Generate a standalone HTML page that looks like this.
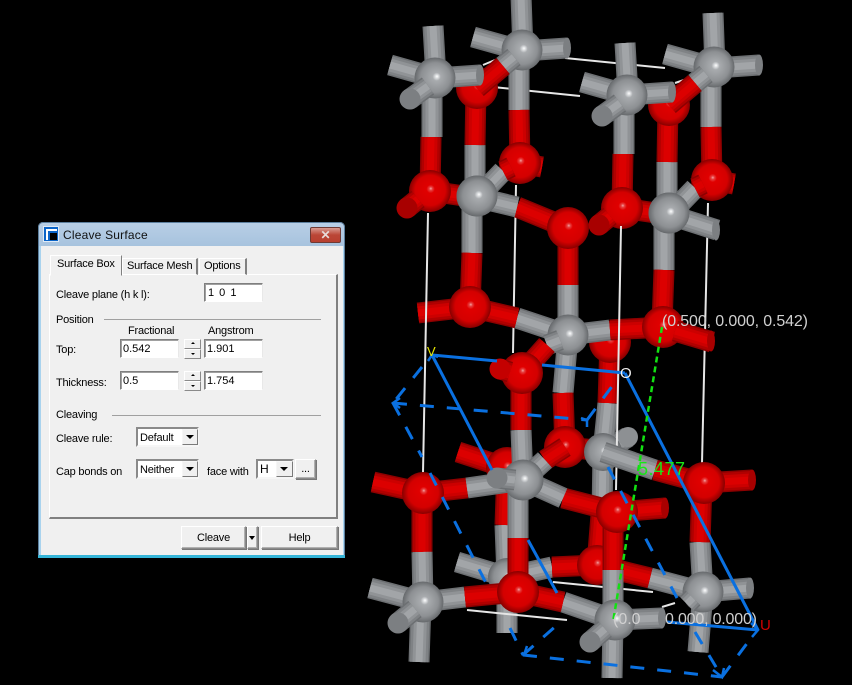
<!DOCTYPE html>
<html><head><meta charset="utf-8"><title>Cleave Surface</title>
<style>
html,body{margin:0;padding:0;background:#000;width:852px;height:685px;overflow:hidden}
svg{position:absolute;left:0;top:0}
.g1{fill:none;stroke:#6c6f72;stroke-width:21}.g2{fill:none;stroke:#7f8285;stroke-width:18}.g3{fill:none;stroke:#909396;stroke-width:13}.g4{fill:none;stroke:#a2a5a8;stroke-width:7}
.r1{fill:none;stroke:#8c0000;stroke-width:21}.r2{fill:none;stroke:#b00000;stroke-width:18}.r3{fill:none;stroke:#cc0000;stroke-width:13}.r4{fill:none;stroke:#dc0000;stroke-width:7}
.gc{fill:#7c7f82}.rc{fill:#a80000}
.w{fill:none;stroke:#e6e6e6;stroke-width:2}
.b{fill:none;stroke:#0a70e0;stroke-width:3}
.d{fill:none;stroke:#0a70e0;stroke-width:3;stroke-dasharray:14 13}
#dlg{position:absolute;left:38px;top:222px;width:307px;height:336px;box-sizing:border-box;background:linear-gradient(#b9cfe6,#a7c3de 24px);border-radius:5px 5px 0 0;font:11px "Liberation Sans",sans-serif;color:#000;box-shadow:inset 0 0 0 1px #5c7f9e}
#dlg div,#dlg span{position:absolute;box-sizing:border-box;white-space:nowrap}
.body{left:2px;top:24px;width:303px;height:310px;background:#f0f0f0}
.bot{left:0;top:333px;width:307px;height:3px;background:#35b5d8}
.ledge{left:1px;top:24px;width:1.5px;height:310px;background:#a9d3ee}
.redge{left:304.5px;top:24px;width:1.5px;height:310px;background:#a9d3ee}
.t{line-height:14px;letter-spacing:-.2px}
.inp{background:#fff;border:1px solid;border-color:#7f7f7f #e8e8e8 #fff #7f7f7f;box-shadow:inset 1px 1px 0 #a0a0a0;line-height:18px;padding-left:2px;font-size:11px}
.btn{background:#f0f0f0;border:1px solid;border-color:#fff #8a8a8a #8a8a8a #fff;box-shadow:1px 1px 0 #777,inset -1px -1px 0 #b0b0b0;text-align:center;line-height:20px;letter-spacing:-.2px}
.ar{width:0;height:0;border-left:4px solid transparent;border-right:4px solid transparent;border-top:4px solid #000}
.line{background:#a0a0a0;height:1px}
.cb{background:#fff;border:2px solid #8a8a8a;border-right-color:#f6f6f6;border-bottom-color:#f6f6f6;line-height:18px;padding-left:2px;letter-spacing:-.2px}
.cbb{background:#f0f0f0;border:1px solid;border-color:#f6f6f6 #7a7a7a #7a7a7a #f6f6f6}
</style></head><body>
<svg width="852" height="685" viewBox="0 0 852 685" xmlns="http://www.w3.org/2000/svg">
<defs>
<radialGradient id="rb" cx=".5" cy=".5" r=".5" fx=".52" fy=".44">
<stop offset="0" stop-color="#f4a6a6"/><stop offset=".08" stop-color="#e64040"/><stop offset=".2" stop-color="#e00000"/><stop offset=".72" stop-color="#d40000"/><stop offset="1" stop-color="#860000"/></radialGradient>
<radialGradient id="gb" cx=".5" cy=".5" r=".5" fx=".55" fy=".46">
<stop offset="0" stop-color="#ffffff"/><stop offset=".07" stop-color="#e0e2e4"/><stop offset=".2" stop-color="#a8abae"/><stop offset=".72" stop-color="#8d9093"/><stop offset="1" stop-color="#66696c"/></radialGradient>

<path id="a1" d="M523 51L521 -4M523 51L473 37M519 51L519 110"/>
<path id="a2" d="M519 110L520 163"/>
<path id="a3" d="M520 163L542 167"/>
<path id="a4" d="M523 51L567 48"/>
<path id="a5" d="M476 88L475 145"/>
<path id="a6" d="M475 145L475 197"/>
<path id="a7" d="M477 88L503 66"/>
<path id="a8" d="M503 66L514 57"/>
<path id="a9" d="M436 78L433 26M436 78L390 65M436 78L480 75M432 78L432 137"/>
<path id="a10" d="M431 137L430 191"/>
<path id="a11" d="M428 86L410 99"/>
<path id="a12" d="M472 197L472 253"/>
<path id="a13" d="M472 253L470 307"/>
<path id="a14" d="M430 191L464 196"/>
<path id="a14b" d="M418 199L407 208M511 167L503 171"/>
<path id="a15" d="M475 197L464 196M503 171L478 197"/>
<g id="unit">
 <use href="#a12" class="g1"/><use href="#a12" class="g2"/><use href="#a12" class="g3"/><use href="#a12" class="g4"/>
 <use href="#a13" class="r1"/><use href="#a13" class="r2"/><use href="#a13" class="r3"/><use href="#a13" class="r4"/>
 <use href="#a1" class="g1"/><use href="#a1" class="g2"/><use href="#a1" class="g3"/><use href="#a1" class="g4"/>
 <use href="#a4" class="g1"/><use href="#a4" class="g2"/><use href="#a4" class="g3"/><use href="#a4" class="g4"/>
 <ellipse class="gc" cx="567" cy="48" rx="4" ry="10.5"/>
 <use href="#a2" class="r1"/><use href="#a2" class="r2"/><use href="#a2" class="r3"/><use href="#a2" class="r4"/>
 <use href="#a3" class="r1"/><use href="#a3" class="r2"/><use href="#a3" class="r3"/><use href="#a3" class="r4"/>
 <circle cx="520" cy="163" r="21" fill="url(#rb)"/>
 <use href="#a6" class="g1"/><use href="#a6" class="g2"/><use href="#a6" class="g3"/><use href="#a6" class="g4"/>
 <use href="#a5" class="r1"/><use href="#a5" class="r2"/><use href="#a5" class="r3"/><use href="#a5" class="r4"/>
 <circle cx="477" cy="88" r="21" fill="url(#rb)"/>
 <circle cx="522" cy="50" r="20.5" fill="url(#gb)"/>
 <use href="#a8" class="g1"/><use href="#a8" class="g2"/><use href="#a8" class="g3"/><use href="#a8" class="g4"/>
 <use href="#a7" class="r1"/><use href="#a7" class="r2"/><use href="#a7" class="r3"/><use href="#a7" class="r4"/>
 <use href="#a10" class="r1"/><use href="#a10" class="r2"/><use href="#a10" class="r3"/><use href="#a10" class="r4"/>
 <use href="#a9" class="g1"/><use href="#a9" class="g2"/><use href="#a9" class="g3"/><use href="#a9" class="g4"/>
 <ellipse class="gc" cx="480" cy="75" rx="4" ry="10.5"/>
 <circle cx="435" cy="78" r="20.5" fill="url(#gb)"/>
 <use href="#a11" class="g1"/><use href="#a11" class="g2"/><use href="#a11" class="g3"/><use href="#a11" class="g4"/>
 <circle class="gc" cx="410" cy="99" r="10.5"/>
 <use href="#a14" class="r1"/><use href="#a14" class="r2"/><use href="#a14" class="r3"/><use href="#a14" class="r4"/>
 <circle cx="430" cy="191" r="21" fill="url(#rb)"/>
 <use href="#a15" class="g1"/><use href="#a15" class="g2"/><use href="#a15" class="g3"/><use href="#a15" class="g4"/>
 <use href="#a14b" class="r1"/><use href="#a14b" class="r2"/><use href="#a14b" class="r3"/><use href="#a14b" class="r4"/>
 <circle class="rc" cx="407" cy="208" r="10.5"/>
 <circle cx="477" cy="196" r="20.5" fill="url(#gb)"/>
</g>

<path id="b1" d="M507 577L457 562M507 577L507 633M507 577L505 525M507 577L552 567M703 592L650 578M603 452L602 515"/>
<path id="b2" d="M505 525L507 468M507 468L458 452M552 567L597 565M650 578L597 565M601 515L597 565"/>
<path id="b3" d="M610 342L608 403M563 393L565 447M565 447L595 450"/>
<path id="b4" d="M608 403L603 452M568 335L563 393M603 452L628 437"/>
<path id="c1" d="M475 197L517 207"/>
<path id="c2" d="M517 207L568 228M568 228L568 285"/>
<path id="c3" d="M568 285L568 335M517 318L568 335M610 330L568 335"/>
<path id="c4" d="M470 307L418 313M470 307L517 318M663 327L610 330"/>
<path id="c5" d="M675 331L712 342"/>
<path id="c6" d="M667 214L717 230"/>
<path id="c7" d="M560 340L547 345M521 430L523 480"/>
<path id="c8" d="M547 345L522 373M521 373L521 430"/>
<path id="c9" d="M510 372L500 369"/>
<path id="d1" d="M603 452L655 470M700 542L703 592M703 592L750 588M703 592L698 652"/>
<path id="d1b" d="M693 598L687 604"/>
<path id="d2" d="M655 470L703 483M702 483L700 542M703 483L752 480"/>
<path id="d3" d="M523 480L467 488M523 480L563 498M523 480L545 460M518 480L518 538M422 552L423 602M613 570L613 618"/>
<path id="d4" d="M467 488L423 493M563 498L617 512M545 460L565 447M518 538L518 592M422 493L422 552M613 512L613 570M423 493L373 482M617 512L665 508"/>
<path id="d5" d="M515 480L497 478"/>
<path id="e1" d="M423 602L370 588M423 602L465 597M421 602L419 662M563 602L615 620M615 620L662 618M613 620L612 678"/>
<path id="e2" d="M465 597L518 592M518 592L563 602"/>
<path id="e3" d="M415 609L398 623M605 629L590 642"/>
</defs>
<rect width="852" height="685" fill="#000"/>

<!-- back lower -->
<use href="#b1" class="g1"/><use href="#b1" class="g2"/><use href="#b1" class="g3"/><use href="#b1" class="g4"/>
<use href="#b2" class="r1"/><use href="#b2" class="r2"/><use href="#b2" class="r3"/><use href="#b2" class="r4"/>
<circle cx="507" cy="468" r="21" fill="url(#rb)"/>
<circle cx="597" cy="565" r="20" fill="url(#rb)"/>
<circle cx="507" cy="577" r="19" fill="url(#gb)"/>
<path class="w" d="M553 582L653 592M467 610L567 620M662 607L675 603"/>
<path class="w" d="M516 185L513 353M708 203L702 463"/>
<use href="#b4" class="g1"/><use href="#b4" class="g2"/><use href="#b4" class="g3"/><use href="#b4" class="g4"/>
<use href="#b3" class="r1"/><use href="#b3" class="r2"/><use href="#b3" class="r3"/><use href="#b3" class="r4"/>
<circle cx="610" cy="342" r="21" fill="url(#rb)"/>
<circle cx="565" cy="447" r="21" fill="url(#rb)"/>
<circle cx="603" cy="452" r="19" fill="url(#gb)"/>
<circle cx="628" cy="437" r="10" fill="#8d9093"/>

<!-- top -->
<path class="w" d="M565 58L665 68M483 86L580 96M483 65L495 60M675 83L687 79"/>
<use href="#unit"/>
<use href="#c3" class="g1"/><use href="#c3" class="g2"/><use href="#c3" class="g3"/><use href="#c3" class="g4"/>
<use href="#c2" class="r1"/><use href="#c2" class="r2"/><use href="#c2" class="r3"/><use href="#c2" class="r4"/>
<use href="#c1" class="g1"/><use href="#c1" class="g2"/><use href="#c1" class="g3"/><use href="#c1" class="g4"/>
<circle cx="477" cy="196" r="20.5" fill="url(#gb)"/>
<circle cx="568" cy="228" r="21" fill="url(#rb)"/>
<use href="#unit" transform="translate(192 17)"/>
<use href="#c6" class="g1"/><use href="#c6" class="g2"/><use href="#c6" class="g3"/><use href="#c6" class="g4"/>
<circle cx="669" cy="213" r="20.5" fill="url(#gb)"/>
<ellipse class="gc" cx="716" cy="230" rx="4" ry="10.5"/>

<!-- middle -->
<use href="#c4" class="r1"/><use href="#c4" class="r2"/><use href="#c4" class="r3"/><use href="#c4" class="r4"/>
<circle cx="470" cy="307" r="21" fill="url(#rb)"/>
<circle cx="663" cy="327" r="21" fill="url(#rb)"/>
<use href="#c5" class="r1"/><use href="#c5" class="r2"/><use href="#c5" class="r3"/><use href="#c5" class="r4"/>
<ellipse class="rc" cx="711" cy="341" rx="4" ry="10.5"/>
<circle cx="568" cy="335" r="20.5" fill="url(#gb)"/>
<path class="w" d="M428 213L423 473M621 226L616 490"/>
<use href="#c7" class="g1"/><use href="#c7" class="g2"/><use href="#c7" class="g3"/><use href="#c7" class="g4"/>
<use href="#c8" class="r1"/><use href="#c8" class="r2"/><use href="#c8" class="r3"/><use href="#c8" class="r4"/>
<circle cx="522" cy="373" r="21" fill="url(#rb)"/>
<use href="#c9" class="r1"/><use href="#c9" class="r2"/><use href="#c9" class="r3"/><use href="#c9" class="r4"/>
<circle fill="#c40000" cx="500" cy="369" r="10.5"/>

<!-- lower -->
<use href="#d1" class="g1"/><use href="#d1" class="g2"/><use href="#d1" class="g3"/><use href="#d1" class="g4"/>
<use href="#d2" class="r1"/><use href="#d2" class="r2"/><use href="#d2" class="r3"/><use href="#d2" class="r4"/>
<circle cx="704" cy="483" r="21" fill="url(#rb)"/>
<ellipse class="rc" cx="752" cy="480" rx="4" ry="10.5"/>
<circle cx="703" cy="592" r="20.5" fill="url(#gb)"/>
<ellipse class="gc" cx="750" cy="588" rx="4" ry="10.5"/>
<use href="#d1b" class="g1"/><use href="#d1b" class="g2"/><use href="#d1b" class="g3"/><use href="#d1b" class="g4"/>
<use href="#d4" class="r1"/><use href="#d4" class="r2"/><use href="#d4" class="r3"/><use href="#d4" class="r4"/>
<use href="#d3" class="g1"/><use href="#d3" class="g2"/><use href="#d3" class="g3"/><use href="#d3" class="g4"/>
<circle cx="423" cy="493" r="21" fill="url(#rb)"/>
<circle cx="617" cy="512" r="21" fill="url(#rb)"/>
<ellipse class="rc" cx="665" cy="508" rx="4" ry="10.5"/>
<circle cx="523" cy="480" r="20.5" fill="url(#gb)"/>
<use href="#d5" class="g1"/><use href="#d5" class="g2"/><use href="#d5" class="g3"/><use href="#d5" class="g4"/>
<circle class="gc" cx="497" cy="478" r="10.5"/>
<use href="#e1" class="g1"/><use href="#e1" class="g2"/><use href="#e1" class="g3"/><use href="#e1" class="g4"/>
<use href="#e2" class="r1"/><use href="#e2" class="r2"/><use href="#e2" class="r3"/><use href="#e2" class="r4"/>
<circle cx="518" cy="592" r="21" fill="url(#rb)"/>
<circle cx="423" cy="602" r="20.5" fill="url(#gb)"/>
<circle cx="615" cy="620" r="20.5" fill="url(#gb)"/>
<ellipse class="gc" cx="662" cy="618" rx="4" ry="10.5"/>
<use href="#e3" class="g1"/><use href="#e3" class="g2"/><use href="#e3" class="g3"/><use href="#e3" class="g4"/>
<circle class="gc" cx="398" cy="623" r="10.5"/>
<circle class="gc" cx="590" cy="642" r="10.5"/>

<!-- blue -->
<path class="b" d="M432 355L497 361M542 365L625 373M432 355L492 470M528 540L557 593M625 373L758 630M667 622L758 630"/>
<path class="d" d="M422 367L393 403M393 403L587 420M587 420L613 385M393 403L422 457M430 473L487 585M510 628L523 655M523 655L722 677M722 677L748 642M523 655L557 625M608 467L677 598M695 632L722 677"/>
<path class="b" style="stroke-width:2.5" d="M400 398L393 403L400 408M527 646L524 655L533 656M713 670L722 677L724 668M751 623L758 630L752 637M428 361L432 355L438 357M581 418L587 420L587 427"/>

<!-- green -->
<path fill="none" stroke="#12e012" stroke-width="2.5" stroke-dasharray="6 4" d="M662 327L613 622"/>

<text x="638" y="475" font-family="Liberation Sans" font-size="18" letter-spacing=".5" fill="#18e818">5.477</text>
<text x="662" y="326" font-family="Liberation Sans" font-size="16" fill="#d0d0d0" textLength="146">(0.500, 0.000, 0.542)</text>
<text x="613" y="624" font-family="Liberation Sans" font-size="16" fill="#d0d0d0">(0.0</text>
<text x="665" y="624" font-family="Liberation Sans" font-size="16" fill="#d0d0d0" textLength="92">0.000, 0.000)</text>
<text x="427" y="356" font-family="Liberation Sans" font-size="13" fill="#e8e800">V</text>
<text x="620" y="378" font-family="Liberation Sans" font-size="15" fill="#f0f0f0">O</text>
<text x="760" y="630" font-family="Liberation Sans" font-size="15" fill="#d00000">U</text>
</svg>

<div id="dlg">
 <div class="body"></div><div class="ledge"></div><div class="redge"></div><div class="bot"></div>
 <!-- title -->
 <div style="left:5px;top:4px;width:16px;height:16px;background:#0a64c8;border:1px solid #dfeaf5"></div>
 <div style="left:8px;top:7px;width:11px;height:11px;border:2px solid #fff;border-right:none;border-bottom:none"></div>
 <div style="left:12px;top:11px;width:7px;height:7px;background:#000"></div>
 <span class="t" style="left:25px;top:6px;font-size:12px;color:#111;letter-spacing:.2px">Cleave Surface</span>
 <div style="left:272px;top:5px;width:31px;height:16px;background:linear-gradient(#d99a90,#bb4636 50%,#b84030);border:1px solid #6e3a34;border-radius:2px"></div>
 <span style="left:272px;top:5px;width:31px;height:16px;text-align:center;font:bold 12px/16px 'Liberation Sans',sans-serif;color:#e8dcda">✕</span>

 <!-- tab panel -->
 <div style="left:11px;top:52px;width:289px;height:245px;border:2px solid;border-color:#fff #808080 #808080 #fff;border-left-width:1px;border-top-width:1px"></div>
 <div style="left:12px;top:33px;width:72px;height:21px;background:#f0f0f0;border:1px solid;border-color:#fff #808080 #f0f0f0 #fff"></div>
 <div style="left:84px;top:36px;width:76px;height:17px;background:#f0f0f0;border:1px solid;border-color:#fff #808080 #fff #fff;border-right-width:2px"></div>
 <div style="left:161px;top:36px;width:48px;height:17px;background:#f0f0f0;border:1px solid;border-color:#fff #808080 #fff #fff;border-right-width:2px"></div>
 <span class="t" style="left:19px;top:35px">Surface Box</span>
 <span class="t" style="left:89px;top:37px">Surface Mesh</span>
 <span class="t" style="left:166px;top:37px">Options</span>

 <span class="t" style="left:18px;top:66px">Cleave plane (h k l):</span>
 <div class="inp" style="left:166px;top:61px;width:59px;height:19px;padding-left:3px;word-spacing:2px">1 0 1</div>

 <span class="t" style="left:18px;top:91px">Position</span>
 <div class="line" style="left:66px;top:97px;width:217px"></div>
 <span class="t" style="left:90px;top:102px">Fractional</span>
 <span class="t" style="left:170px;top:102px">Angstrom</span>

 <span class="t" style="left:18px;top:121px">Top:</span>
 <div class="inp" style="left:82px;top:117px;width:59px;height:19px">0.542</div>
 <div class="btn" style="left:146px;top:117px;width:17px;height:10px;box-shadow:none"></div>
 <div class="btn" style="left:146px;top:127px;width:17px;height:10px;box-shadow:none"></div>
 <div class="inp" style="left:166px;top:117px;width:59px;height:19px">1.901</div>
 <div style="left:153px;top:120px;width:0;height:0;border:2px solid transparent;border-bottom-color:#000;border-top:none"></div>
 <div style="left:153px;top:131px;width:0;height:0;border:2px solid transparent;border-top-color:#000;border-bottom:none"></div>

 <span class="t" style="left:18px;top:154px">Thickness:</span>
 <div class="inp" style="left:82px;top:149px;width:59px;height:19px">0.5</div>
 <div class="btn" style="left:146px;top:149px;width:17px;height:10px;box-shadow:none"></div>
 <div class="btn" style="left:146px;top:159px;width:17px;height:10px;box-shadow:none"></div>
 <div class="inp" style="left:166px;top:149px;width:59px;height:19px">1.754</div>
 <div style="left:153px;top:152px;width:0;height:0;border:2px solid transparent;border-bottom-color:#000;border-top:none"></div>
 <div style="left:153px;top:163px;width:0;height:0;border:2px solid transparent;border-top-color:#000;border-bottom:none"></div>

 <span class="t" style="left:18px;top:186px">Cleaving</span>
 <div class="line" style="left:74px;top:193px;width:209px"></div>

 <span class="t" style="left:18px;top:210px">Cleave rule:</span>
 <div class="cb" style="left:98px;top:205px;width:63px;height:20px">Default</div>
 <div class="cbb" style="left:144px;top:207px;width:16px;height:16px"></div>
 <div class="ar" style="left:148px;top:213px"></div>

 <span class="t" style="left:18px;top:243px">Cap bonds on</span>
 <div class="cb" style="left:98px;top:237px;width:63px;height:20px">Neither</div>
 <div class="cbb" style="left:144px;top:239px;width:16px;height:16px"></div>
 <div class="ar" style="left:148px;top:245px"></div>
 <span class="t" style="left:169px;top:243px">face with</span>
 <div class="cb" style="left:218px;top:237px;width:38px;height:20px;font-size:12px;line-height:16px">H</div>
 <div class="cbb" style="left:238px;top:239px;width:17px;height:16px"></div>
 <div class="ar" style="left:242px;top:245px"></div>
 <div class="btn" style="left:257px;top:237px;width:21px;height:20px;line-height:19px">...</div>

 <div class="btn" style="left:143px;top:304px;width:65px;height:23px;line-height:22px">Cleave</div>
 <div class="btn" style="left:209px;top:304px;width:11px;height:23px"></div>
 <div class="ar" style="left:211px;top:314px;border-left-width:3.5px;border-right-width:3.5px"></div>
 <div class="btn" style="left:223px;top:304px;width:77px;height:23px;line-height:22px">Help</div>
</div>
</body></html>
